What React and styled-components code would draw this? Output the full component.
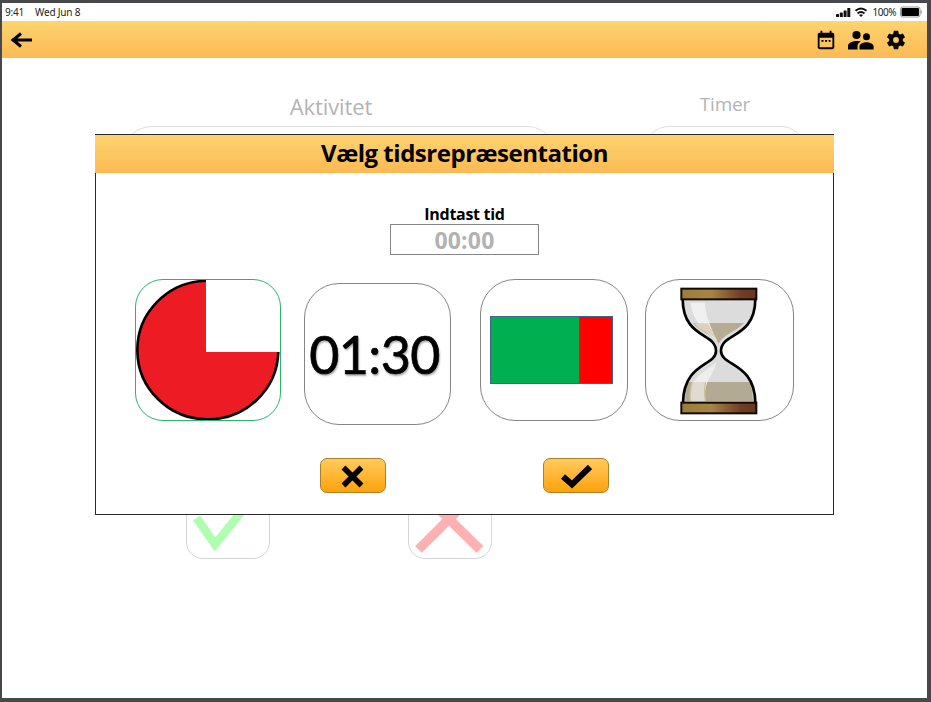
import React from "react";
import styled, { createGlobalStyle } from "styled-components";

const GlobalStyle = createGlobalStyle`
  * { box-sizing: border-box; }
  body { margin: 0; background: #46484b; font-family: "Open Sans", "Noto Sans", sans-serif; }
  button { font: inherit; padding: 0; cursor: pointer; }
`;

const Screen = styled.div`
  position: relative;
  width: 931px;
  height: 702px;
  overflow: hidden;
  background: #fff;
  border: solid #46484b;
  border-width: 3px 4px 4px 2px;
`;

const StatusBar = styled.header`
  display: flex;
  align-items: center;
  justify-content: space-between;
  height: 18px;
  padding: 0 5px 0 3px;
  color: #222;
  font: 10px/16px "Noto Sans", sans-serif;
`;

const StatusGroup = styled.div`
  display: flex;
  align-items: center;
  gap: ${(p) => p.$gap}px;
  letter-spacing: ${(p) => p.$tracking}px;
`;

const Toolbar = styled.nav`
  display: flex;
  align-items: center;
  justify-content: space-between;
  height: 37px;
  padding: 1px 20px 0 6px;
  background: linear-gradient(#fed46f, #fbb954);
`;

const ToolbarActions = styled.div`
  display: flex;
  align-items: center;
  gap: 9px;
`;

const IconButton = styled.button`
  display: flex;
  border: 0;
  background: none;
`;

const Workspace = styled.main`
  display: flex;
  flex-direction: column;
  padding: 36px 0 0 120px;
`;

const FieldRow = styled.div`
  display: flex;
  gap: 87px;
`;

const Field = styled.section`
  display: flex;
  flex-direction: column;
  align-items: center;
  width: ${(p) => p.$width}px;
`;

const FieldLabel = styled.h2`
  margin: 0;
  height: 32px;
  padding-right: ${(p) => p.$shift || 0}px;
  color: #b4b4b4;
  font-size: ${(p) => p.$size}px;
  font-weight: 400;
  line-height: ${(p) => p.$line}px;
  letter-spacing: ${(p) => p.$tracking}px;
`;

const FieldBox = styled.div`
  align-self: stretch;
  height: 300px;
  border: 1px solid #dedede;
  border-radius: ${(p) => p.$radius}px;
`;

const AnswerRow = styled.div`
  display: flex;
  gap: 138px;
  margin: 49px 0 0 64px;
`;

const Answer = styled.div`
  width: 84px;
  height: 84px;
  border: 1px solid #d3d6d6;
  border-radius: 17px;
`;

const Dialog = styled.section`
  position: absolute;
  left: 93px;
  top: 131px;
  width: 739px;
  height: 381px;
  display: flex;
  flex-direction: column;
  align-items: center;
  border: 1px solid #29292b;
  background: #fff;
`;

const DialogTitle = styled.h1`
  align-self: stretch;
  height: 38px;
  margin: 0 -1px;
  background: linear-gradient(#fed46f, #fbb954);
  color: #000;
  font-size: 24px;
  font-weight: 700;
  line-height: 36px;
  text-align: center;
  letter-spacing: -0.48px;
`;

const TimeEntry = styled.label`
  display: flex;
  flex-direction: column;
  align-items: center;
  margin-top: 31px;
  color: #000;
  font-size: 16px;
  font-weight: 700;
  line-height: 20px;
  letter-spacing: -0.3px;
`;

const TimeField = styled.span`
  width: 149px;
  height: 31px;
  border: 1px solid #858585;
  color: #b2b2b2;
  font-size: 23px;
  line-height: 30px;
  text-align: center;
  letter-spacing: 0.2px;
`;

const OptionRow = styled.div`
  display: flex;
  align-self: stretch;
  margin: 24px 39px 0;
`;

const Option = styled.button`
  display: flex;
  flex: none;
  align-items: center;
  justify-content: center;
  width: ${(p) => p.$width}px;
  height: 142px;
  margin: ${(p) => p.$drop || 0}px ${(p) => p.$after || 0}px 0 0;
  border: 1px solid ${(p) => (p.$selected ? "#2db36c" : "#858585")};
  border-radius: ${(p) => (p.$selected ? 28 : 35)}px;
  background: #fff;
`;

const Digits = styled.span`
  margin: 0 3px 0 -3px;
  color: #000;
  font: 52px/60px Lato, "Open Sans", sans-serif;
  text-shadow: 1px 2px 2px #aaa;
  letter-spacing: -0.6px;
  -webkit-text-stroke: 0.7px #000;
`;

const Bar = styled.div`
  display: flex;
  width: 123px;
  height: 68px;
  margin-right: 6px;
  border: 1px solid #42638c;
`;

const BarPart = styled.div`
  width: ${(p) => p.$width}px;
  background: ${(p) => p.$color};
  & + & { border-left: 1px solid #64504d; }
`;

const DialogActions = styled.footer`
  display: flex;
  gap: 157px;
  margin: 33px 0 0;
`;

const ActionButton = styled.button`
  display: flex;
  align-items: center;
  justify-content: center;
  width: 66px;
  height: 35px;
  border: 1px solid #a8812a;
  border-radius: 7px;
  background: linear-gradient(#ffcb5b, #ffa20d);
`;

function SignalIcons() {
  return (
    <svg width="34" height="12" viewBox="0 0 34 12">
      <g fill="#111">
        <rect x="1" y="8" width="3" height="3" rx=".6" />
        <rect x="4.8" y="6.5" width="3" height="4.5" rx=".6" />
        <rect x="8.6" y="4.5" width="3" height="6.5" rx=".6" />
        <rect x="12.3" y="2" width="3" height="9" rx=".6" />
        <path d="m26 11 2-2q-2-1.600-4 0Z" />
      </g>
      <g fill="none" stroke="#111" strokeWidth="1.9">
        <path d="M20.500 4.700q5.500-4.600 11 0M22.500 7.500q3.500-3 7 0" />
      </g>
    </svg>
  );
}

function Battery() {
  return (
    <svg width="22" height="12" viewBox="0 0 22 12">
      <rect x=".5" y="1" width="19.500" height="10" rx="2" fill="none" stroke="#999" />
      <rect x="1.500" y="2" width="17.500" height="8" rx="1" fill="#000" />
      <path d="M21.200 4.500v3" stroke="#888" />
    </svg>
  );
}

function BackArrow() {
  return (
    <svg width="26" height="20" viewBox="0 0 26 20" fill="none" stroke="#000" strokeWidth="3">
      <path d="M4 10h20M13 3.500 5 10l8 6.500" strokeLinejoin="miter" />
    </svg>
  );
}

function CalendarIcon() {
  return (
    <svg width="22" height="22" viewBox="0 0 24 24">
      <path d="M19 4h-1V2h-2v2H8V2H6v2H5c-1.110 0-2 .9-2 2v14c0 1.100.89 2 2 2h14c1.100 0 2-.9 2-2V6c0-1.100-.9-2-2-2Zm0 16H5V9.500h14V20ZM7 12h2.300v2H7Zm3.900 0h2.300v2h-2.300Zm3.900 0H17v2h-2.200Z" />
    </svg>
  );
}

function PeopleIcon() {
  return (
    <svg width="30" height="28" viewBox="0 0 30 28">
      <circle cx="10.500" cy="9" r="4.100" />
      <circle cx="20.500" cy="10.800" r="3.500" />
      <path d="M20.500 16.200c-2.300 0-7 1.200-7 4V23.500H27.600v-3.300c0-2.800-4.800-4-7.100-4ZM10.500 15C7.500 15 2 16.400 2 20v3.500h9.500v-3.300c0-1.500.7-3.200 3.300-4.700-1.500-.4-3-.5-4.300-.5Z" />
    </svg>
  );
}

function GearIcon() {
  return (
    <svg width="22" height="22" viewBox="0 0 24 24">
      <path d="M19.430 12.980c.04-.32.07-.64.07-.98s-.03-.66-.07-.98l2.110-1.650c.19-.15.24-.42.12-.64l-2-3.460c-.12-.22-.39-.3-.61-.22l-2.490 1c-.52-.4-1.080-.73-1.690-.98l-.38-2.650C14.460 2.180 14.250 2 14 2h-4c-.25 0-.46.18-.49.42l-.38 2.650c-.61.25-1.170.59-1.690.98l-2.490-1c-.23-.09-.49 0-.61.22l-2 3.460c-.13.22-.07.49.12.64l2.110 1.650c-.04.32-.07.65-.07.98s.03.66.07.98l-2.110 1.650c-.19.15-.24.42-.12.64l2 3.460c.12.22.39.3.61.22l2.490-1c.52.4 1.080.73 1.690.98l.38 2.650c.03.24.24.42.49.42h4c.25 0 .46-.18.49-.42l.38-2.650c.61-.25 1.170-.59 1.690-.98l2.490 1c.23.09.49 0 .61-.22l2-3.460c.12-.22.07-.49-.12-.64l-2.110-1.650ZM12 15.200a3.200 3.200 0 1 1 0-6.400 3.200 3.200 0 0 1 0 6.400Z" />
    </svg>
  );
}

function PieTimer() {
  return (
    <svg width="144" height="140" viewBox="0 0 144 140">
      <path d="M70 .8A70.500 69.300 0 1 0 142.300 72H70Z" fill="#ed1c24" />
      <path d="M70 .8A70.500 69.300 0 1 0 142.300 72" fill="none" stroke="#000" strokeWidth="2.600" />
    </svg>
  );
}

function Hourglass() {
  return (
    <svg width="80" height="130" viewBox="134 48 240 390">
      <defs>
        <linearGradient id="wood">
          <stop stopColor="#9d7d38" />
          <stop offset=".4" stopColor="#a78444" />
          <stop offset=".8" stopColor="#713c25" />
          <stop offset="1" stopColor="#68371e" />
        </linearGradient>
      </defs>
      <path d="M142 90C143 210 242 190 242 246C242 292 144 280 143 402H360C359 280 257 292 257 246C257 190 359 210 360 90Z" fill="#dcdcdc" />
      <path d="M173 162H326C300 190 260 198 250 225C237 197 193 190 173 162Z" fill="#b7ac93" />
      <path d="M154 339H346Q352 366 353 397H150Q149 360 154 339Z" fill="#b3aa94" />
      <path d="M166 101H208C212 145 228 180 246 217C222 193 174 170 166 101Z" fill="#f0f0f0" />
      <path d="M177 163H218L246 217C226 188 192 188 177 163Z" fill="#ddd1bd" />
      <path d="M242 278C238 320 202 331 210 397H165C158 315 218 310 242 278Z" fill="#eeeeec" />
      <path d="M171 339H211Q205 360 210 397H165Q164 361 171 339Z" fill="#dedbd2" />
      <path d="M211 339Q205 362 210 397M171 339Q163 362 165 397" fill="none" stroke="#d4c19c" strokeWidth="4" />
      <path d="M142 90C143 210 242 190 242 246C242 292 144 280 143 402M360 90C359 210 257 190 257 246C257 292 359 280 360 402" fill="none" stroke="#000" strokeWidth="8" />
      <g fill="url(#wood)" stroke="#100b08" strokeWidth="6">
        <rect x="138" y="59" width="225" height="32" />
        <rect x="138" y="401" width="225" height="32" />
      </g>
    </svg>
  );
}

function CrossMark() {
  return (
    <svg width="26" height="24" viewBox="0 0 26 24" stroke="#000" strokeWidth="5.500">
      <path d="m3.500 3.500 18 18m0-18-18 18" />
    </svg>
  );
}

function CheckMark() {
  return (
    <svg width="32" height="26" viewBox="0 0 32 26" fill="none" stroke="#000" strokeWidth="6">
      <path d="m3 13.500 9 8L30 4" />
    </svg>
  );
}

function FadedCheck() {
  return (
    <svg width="82" height="82" viewBox="0 0 82 82" fill="none" stroke="#b0ffb0" strokeWidth="8.500">
      <path d="M9.500 42 28 68.500 67 20" />
    </svg>
  );
}

function FadedCross() {
  return (
    <svg width="82" height="82" viewBox="0 0 82 82" stroke="#ffb0b0" strokeWidth="9.500">
      <path d="m9.500 73.500 56-56M71 73.500l-57-56" />
    </svg>
  );
}

export default function App() {
  return (
    <>
      <GlobalStyle />
      <Screen>
        <StatusBar>
          <StatusGroup $gap={11} $tracking={-0.2}>
            <span>9:41</span>
            <span>Wed Jun 8</span>
          </StatusGroup>
          <StatusGroup $gap={4} $tracking={-0.5}>
            <SignalIcons />
            <span>100%</span>
            <Battery />
          </StatusGroup>
        </StatusBar>
        <Toolbar>
          <IconButton aria-label="Tilbage"><BackArrow /></IconButton>
          <ToolbarActions>
            <IconButton aria-label="Kalender"><CalendarIcon /></IconButton>
            <IconButton aria-label="Borgere"><PeopleIcon /></IconButton>
            <IconButton aria-label="Indstillinger"><GearIcon /></IconButton>
          </ToolbarActions>
        </Toolbar>
        <Workspace>
          <FieldRow>
            <Field $width={435}>
              <FieldLabel $size={22} $line={25} $tracking={-0.1} $shift={17}>Aktivitet</FieldLabel>
              <FieldBox $radius={30} />
            </Field>
            <Field $width={162}>
              <FieldLabel $size={19} $line={21} $tracking={-0.2}>Timer</FieldLabel>
              <FieldBox $radius={25} />
            </Field>
          </FieldRow>
          <AnswerRow>
            <Answer><FadedCheck /></Answer>
            <Answer><FadedCross /></Answer>
          </AnswerRow>
        </Workspace>
        <Dialog role="dialog">
          <DialogTitle>Vælg tidsrepræsentation</DialogTitle>
          <TimeEntry>
            Indtast tid
            <TimeField>00:00</TimeField>
          </TimeEntry>
          <OptionRow>
            <Option $width={146} $after={23} $selected><PieTimer /></Option>
            <Option $width={147} $after={29} $drop={4}><Digits>01:30</Digits></Option>
            <Option $width={148} $after={17}>
              <Bar>
                <BarPart $width={88} $color="#00b050" />
                <BarPart $width={33} $color="#ff0000" />
              </Bar>
            </Option>
            <Option $width={149}><Hourglass /></Option>
          </OptionRow>
          <DialogActions>
            <ActionButton aria-label="Annuller"><CrossMark /></ActionButton>
            <ActionButton aria-label="Godkend"><CheckMark /></ActionButton>
          </DialogActions>
        </Dialog>
      </Screen>
    </>
  );
}
